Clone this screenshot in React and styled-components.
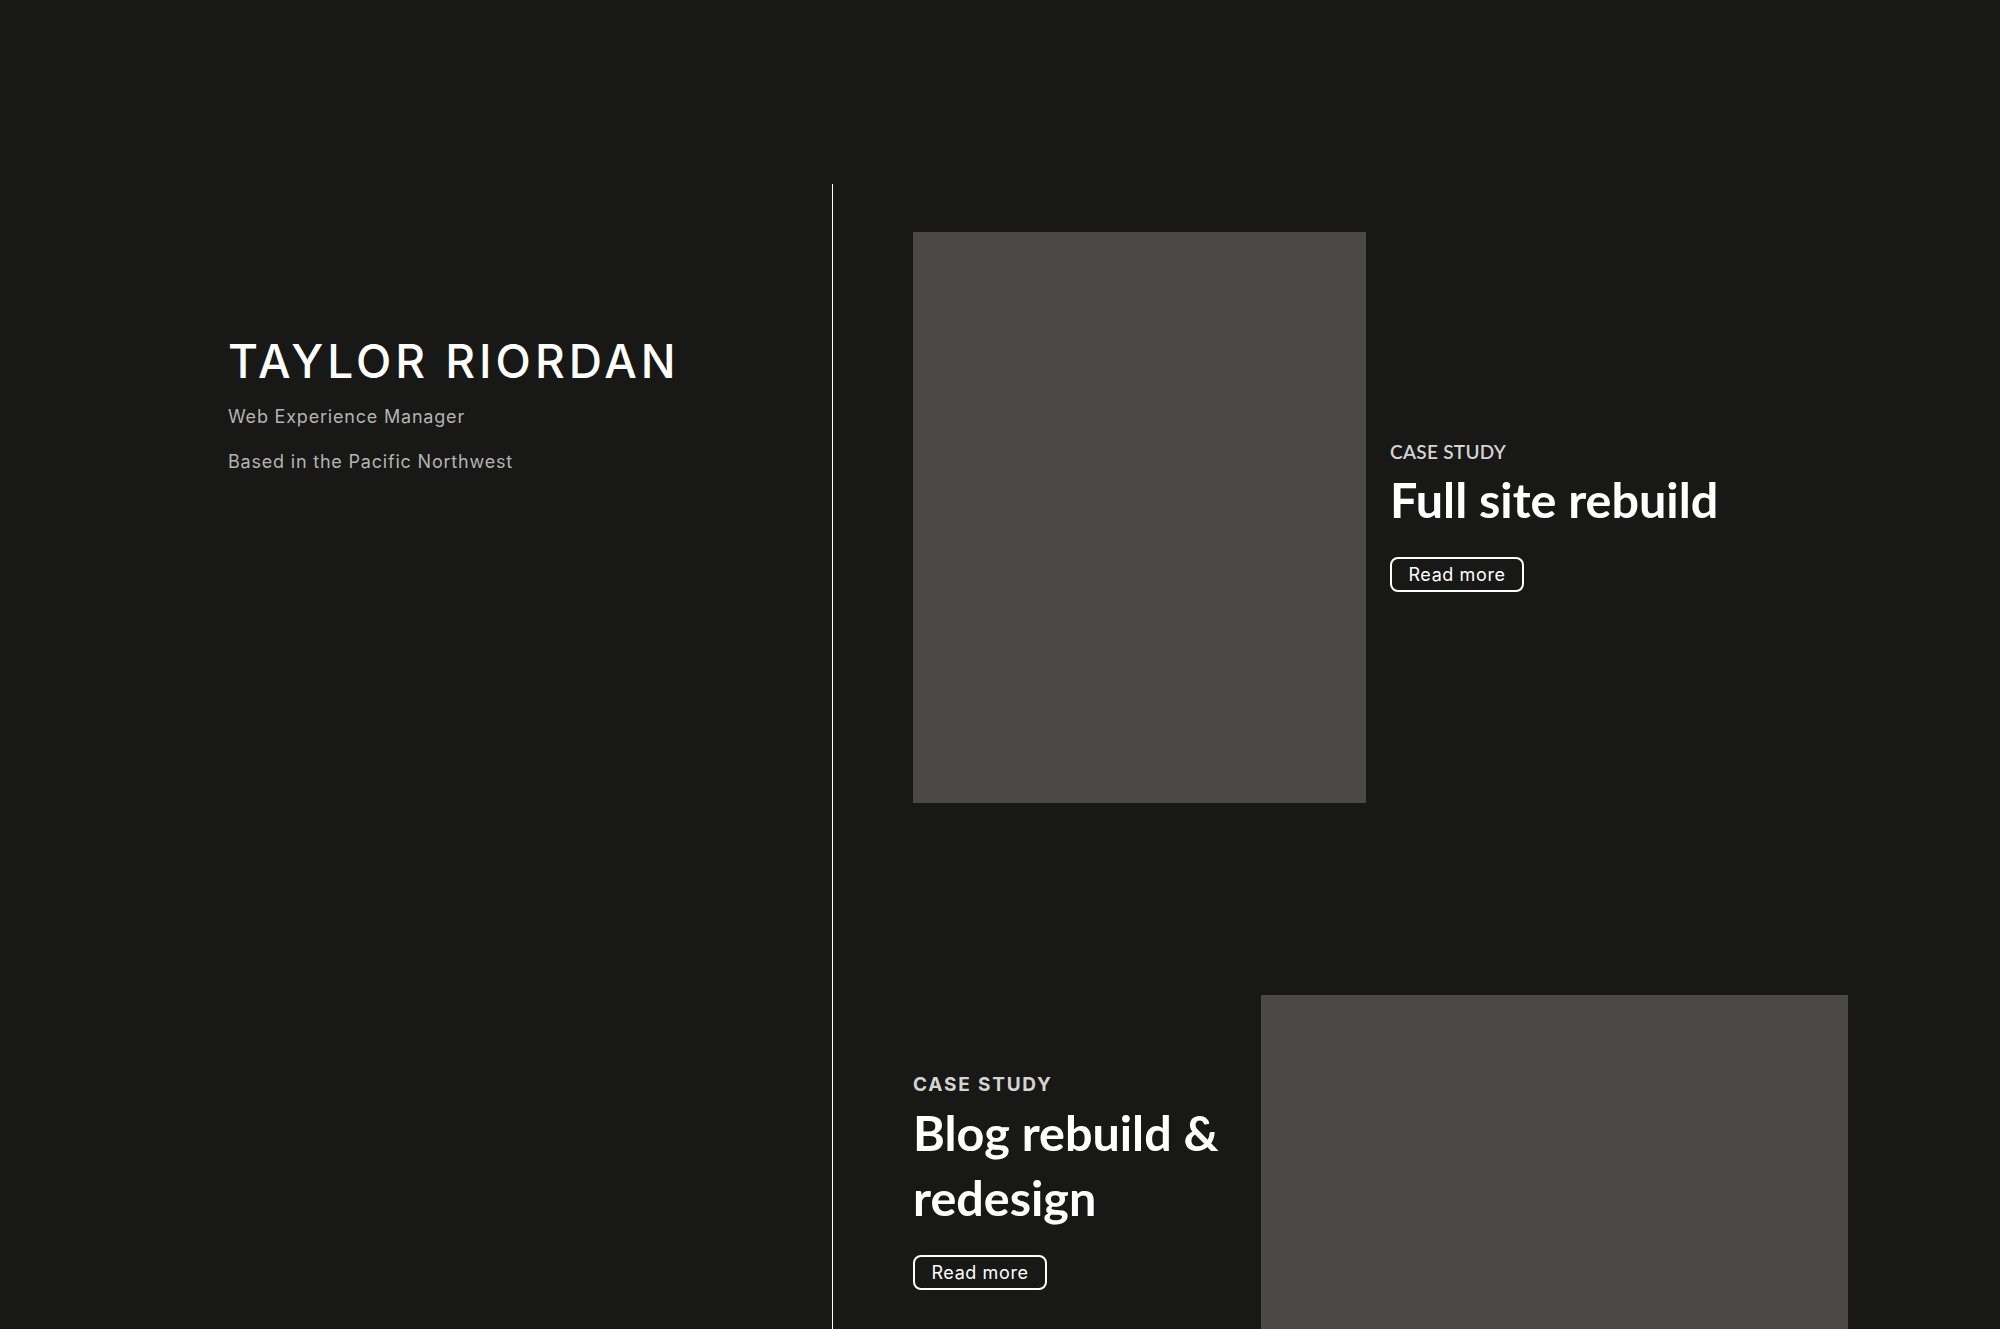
import React from "react";
import styled, { createGlobalStyle } from "styled-components";

const Global = createGlobalStyle`
  html, body { margin: 0; padding: 0; background: #181816; }
  body { font-family: Inter, "Liberation Sans", sans-serif; color: #fff; }
  * { box-sizing: border-box; }
`;

const Page = styled.main`
  display: grid;
  grid-template-columns: 832px 1fr;
  padding-top: 184px;
  min-height: 1329px;
  background: #181816;
`;

const Intro = styled.header`
  padding: 149px 0 0 228px;
`;

const Name = styled.h1`
  margin: 0;
  font-family: Inter, "Liberation Sans", sans-serif;
  font-weight: 500;
  font-size: 46px;
  line-height: 56px;
  letter-spacing: 4px;
  color: #ffffff;
  white-space: nowrap;
`;

const Meta = styled.p`
  margin: ${(p) => (p.$first ? "5px" : "0")} 0 0;
  font-family: Inter, "Liberation Sans", sans-serif;
  font-size: 18px;
  line-height: 45px;
  letter-spacing: 0.8px;
  color: #b4b4b2;
`;

const Work = styled.section`
  border-left: 1px solid #ffffff;
  padding: 48px 152px 0 80px;
  display: flex;
  flex-direction: column;
  gap: 192px;
`;

const Card = styled.article`
  display: flex;
  align-items: center;
  gap: ${(p) => p.$gap}px;
`;

const Thumb = styled.div`
  flex: none;
  width: ${(p) => p.$w}px;
  height: ${(p) => p.$h}px;
  background: #4b4847;
`;

const Info = styled.div`
  width: ${(p) => (p.$w ? `${p.$w}px` : "auto")};
  flex: ${(p) => (p.$w ? "none" : "1")};
  padding-bottom: 4px;
  display: flex;
  flex-direction: column;
  align-items: flex-start;
`;

const Label = styled.span`
  font-family: ${(p) => (p.$wide ? 'Inter, "Liberation Sans", sans-serif' : 'Lato, "Open Sans", sans-serif')};
  font-weight: ${(p) => (p.$wide ? 700 : 600)};
  font-size: 19px;
  line-height: 24px;
  letter-spacing: ${(p) => (p.$wide ? "1.8px" : "0.3px")};
  color: #d4d4d2;
  text-transform: uppercase;
`;

const Title = styled.h2`
  margin: 3px 0 0;
  font-family: Lato, "Open Sans", sans-serif;
  font-weight: 700;
  font-size: 48.5px;
  line-height: 65px;
  color: #ffffff;
`;

const More = styled.a`
  margin-top: 25px;
  display: inline-flex;
  align-items: center;
  justify-content: center;
  width: 134px;
  height: 35px;
  border: 2px solid #ffffff;
  border-radius: 8px;
  font-family: Inter, "Liberation Sans", sans-serif;
  font-size: 18px;
  letter-spacing: 0.6px;
  color: #ffffff;
  text-decoration: none;
`;

export default function App() {
  return (
    <>
      <Global />
      <Page>
        <Intro>
          <Name>TAYLOR RIORDAN</Name>
          <Meta $first>Web Experience Manager</Meta>
          <Meta>Based in the Pacific Northwest</Meta>
        </Intro>
        <Work>
          <Card $gap={24}>
            <Thumb $w={453} $h={571} />
            <Info>
              <Label>Case Study</Label>
              <Title>Full site rebuild</Title>
              <More href="#">Read more</More>
            </Info>
          </Card>
          <Card $gap={26}>
            <Info $w={322}>
              <Label $wide>Case Study</Label>
              <Title>Blog rebuild &amp; redesign</Title>
              <More href="#">Read more</More>
            </Info>
            <Thumb $w={587} $h={376} />
          </Card>
        </Work>
      </Page>
    </>
  );
}
